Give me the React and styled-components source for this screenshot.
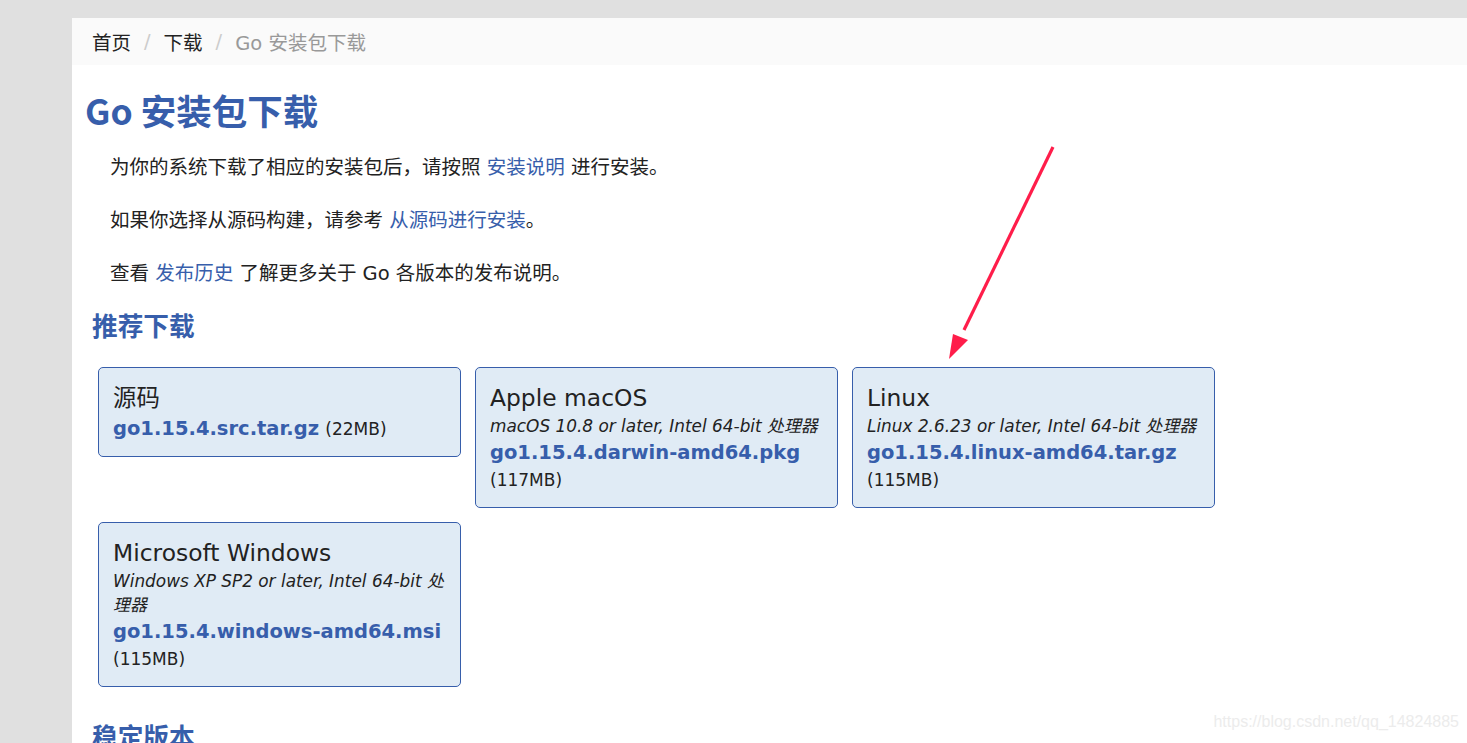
import React from "react";
import styled, { createGlobalStyle } from "styled-components";

const GlobalStyle = createGlobalStyle`
  html, body {
    margin: 0;
    padding: 0;
    background: #e0e0e0;
  }
  body {
    font-family: "DejaVu Sans", "Noto Sans CJK SC", sans-serif;
    color: #222;
  }
`;

const downloads = [
  {
    title: "源码",
    file: "go1.15.4.src.tar.gz",
    size: "22MB",
    inline: true,
  },
  {
    title: "Apple macOS",
    desc: "macOS 10.8 or later, Intel 64-bit 处理器",
    file: "go1.15.4.darwin-amd64.pkg",
    size: "117MB",
  },
  {
    title: "Linux",
    desc: "Linux 2.6.23 or later, Intel 64-bit 处理器",
    file: "go1.15.4.linux-amd64.tar.gz",
    size: "115MB",
  },
  {
    title: "Microsoft Windows",
    desc: "Windows XP SP2 or later, Intel 64-bit 处理器",
    file: "go1.15.4.windows-amd64.msi",
    size: "115MB",
  },
];

const App = () => {
  return (
    <>
      <GlobalStyle />
      <Page>
        <Panel>
          <Breadcrumb>
            <Crumb href="#">首页</Crumb>
            <Sep>/</Sep>
            <Crumb href="#">下载</Crumb>
            <Sep>/</Sep>
            <Current>Go 安装包下载</Current>
          </Breadcrumb>

          <Main>
            <Title>Go 安装包下载</Title>
            <Text>
              为你的系统下载了相应的安装包后，请按照 <Link href="#">安装说明</Link> 进行安装。
            </Text>
            <Text>
              如果你选择从源码构建，请参考 <Link href="#">从源码进行安装</Link>。
            </Text>
            <Text>
              查看 <Link href="#">发布历史</Link> 了解更多关于 Go 各版本的发布说明。
            </Text>

            <SubTitle>推荐下载</SubTitle>
            <Boxes>
              {downloads.map((d) => (
                <Box key={d.file} href="#">
                  <BoxTitle>{d.title}</BoxTitle>
                  {d.desc && <BoxDesc>{d.desc}</BoxDesc>}
                  {d.inline ? (
                    <FileRow>
                      <FileName>{d.file}</FileName> <Size>({d.size})</Size>
                    </FileRow>
                  ) : (
                    <>
                      <FileRow>
                        <FileName>{d.file}</FileName>
                      </FileRow>
                      <SizeRow>({d.size})</SizeRow>
                    </>
                  )}
                </Box>
              ))}
            </Boxes>

            <SubTitle>稳定版本</SubTitle>
          </Main>

          <Arrow width="120" height="230" viewBox="0 0 120 230">
            <line x1="111" y1="7" x2="22" y2="190" stroke="#ff1d4a" strokeWidth="3.2" />
            <polygon points="7,219 11,194 26,200" fill="#ff1d4a" />
          </Arrow>
          <Watermark>https://blog.csdn.net/qq_14824885</Watermark>
        </Panel>
      </Page>
    </>
  );
};

const Page = styled.div`
  padding: 18px 0 0 72px;
  height: 743px;
  box-sizing: border-box;
  overflow: hidden;
`;

const Panel = styled.div`
  position: relative;
  background: #fff;
  min-height: 725px;
`;

const Breadcrumb = styled.nav`
  display: flex;
  align-items: center;
  height: 47px;
  padding: 0 20px;
  background: #fafafa;
  font-size: 19.5px;
`;

const Crumb = styled.a`
  color: #222;
  text-decoration: none;
`;

const Sep = styled.span`
  color: #ccc;
  padding: 0 13px;
`;

const Current = styled.span`
  color: #999;
`;

const Main = styled.main`
  padding-left: 13px;
`;

const Title = styled.h1`
  margin: 22px 0 0;
  font-family: "Noto Sans CJK SC", sans-serif;
  font-size: 35.5px;
  line-height: 45px;
  font-weight: 700;
  color: #375eab;
`;

const Text = styled.p`
  margin: 22px 0 0 25px;
  font-size: 19.5px;
  line-height: 27px;
  color: #222;

  & + & {
    margin-top: 26px;
  }
`;

const Link = styled.a`
  color: #375eab;
  text-decoration: none;
`;

const SubTitle = styled.h2`
  margin: 22px 0 0 7px;
  font-family: "Noto Sans CJK SC", sans-serif;
  font-size: 25.7px;
  line-height: 32px;
  font-weight: 700;
  color: #375eab;
`;

const Boxes = styled.div`
  display: flex;
  flex-wrap: wrap;
  align-items: flex-start;
  gap: 14px;
  width: 1120px;
  margin: 26px 0 33px 13px;
`;

const Box = styled.a`
  display: block;
  box-sizing: border-box;
  width: 363px;
  padding: 14px 11px 13px 14px;
  background: #e0ebf5;
  border: 1px solid #375eab;
  border-radius: 5px;
  color: #222;
  text-decoration: none;
`;

const BoxTitle = styled.div`
  font-size: 23.4px;
  line-height: 32px;
`;

const BoxDesc = styled.div`
  font-size: 16.9px;
  line-height: 24px;
  font-style: italic;
`;

const FileRow = styled.div`
  font-size: 19.5px;
  line-height: 29px;
`;

const FileName = styled.span`
  font-weight: 700;
  color: #375eab;
`;

const Size = styled.span`
  font-size: 17px;
  line-height: 1;
`;

const SizeRow = styled.div`
  font-size: 17px;
  line-height: 27px;
`;

const Arrow = styled.svg`
  position: absolute;
  left: 870px;
  top: 122px;
  pointer-events: none;
`;

const Watermark = styled.div`
  position: absolute;
  right: 8px;
  top: 695px;
  font-family: "Liberation Sans", Arial, sans-serif;
  font-size: 16px;
  color: #ececec;
`;

export default App;
